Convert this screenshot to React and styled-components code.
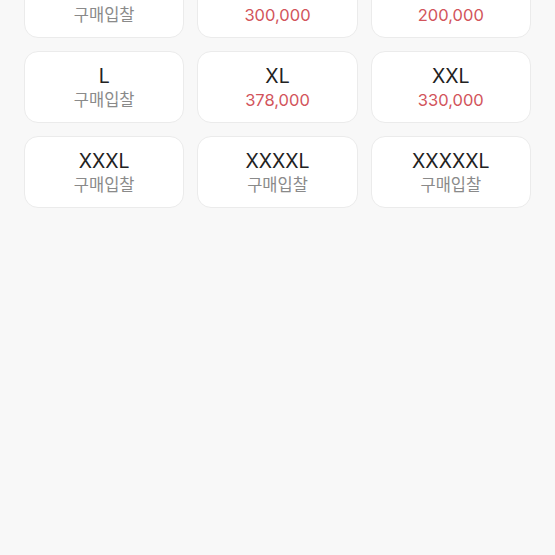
import React from 'react';
import styled, { createGlobalStyle } from 'styled-components';

const GlobalStyle = createGlobalStyle`
  html, body {
    margin: 0;
    padding: 0;
    background: #f8f8f8;
    font-family: Inter, 'Noto Sans CJK KR', sans-serif;
  }
`;

const Page = styled.div`
  width: 555px;
  height: 555px;
  overflow: hidden;
  background: #f8f8f8;
`;

const Grid = styled.div`
  display: grid;
  grid-template-columns: repeat(3, 1fr);
  gap: 13px;
  padding: 0 24px;
  margin-top: -34px;
`;

const Card = styled.button`
  height: 72px;
  background: #fff;
  border: 1px solid #ebebeb;
  border-radius: 14px;
  display: flex;
  flex-direction: column;
  align-items: center;
  justify-content: center;
  gap: 1px;
  padding: 0;
  font-family: inherit;
  cursor: pointer;
`;

const Size = styled.span`
  font-size: 19.5px;
  line-height: 24px;
  color: #222;
`;

const Price = styled.span`
  font-size: 16.5px;
  line-height: 22px;
  color: ${p => (p.$bid ? '#8a8a8a' : '#d2545b')};
`;

const sizes = [
  { size: 'M', price: null },
  { size: 'S', price: '300,000' },
  { size: 'XS', price: '200,000' },
  { size: 'L', price: null },
  { size: 'XL', price: '378,000' },
  { size: 'XXL', price: '330,000' },
  { size: 'XXXL', price: null },
  { size: 'XXXXL', price: null },
  { size: 'XXXXXL', price: null }
];

export default function App() {
  return (
    <Page>
      <GlobalStyle />
      <Grid>
        {sizes.map(item => (
          <Card key={item.size}>
            <Size>{item.size}</Size>
            <Price $bid={!item.price}>{item.price || '구매입찰'}</Price>
          </Card>
        ))}
      </Grid>
    </Page>
  );
}
